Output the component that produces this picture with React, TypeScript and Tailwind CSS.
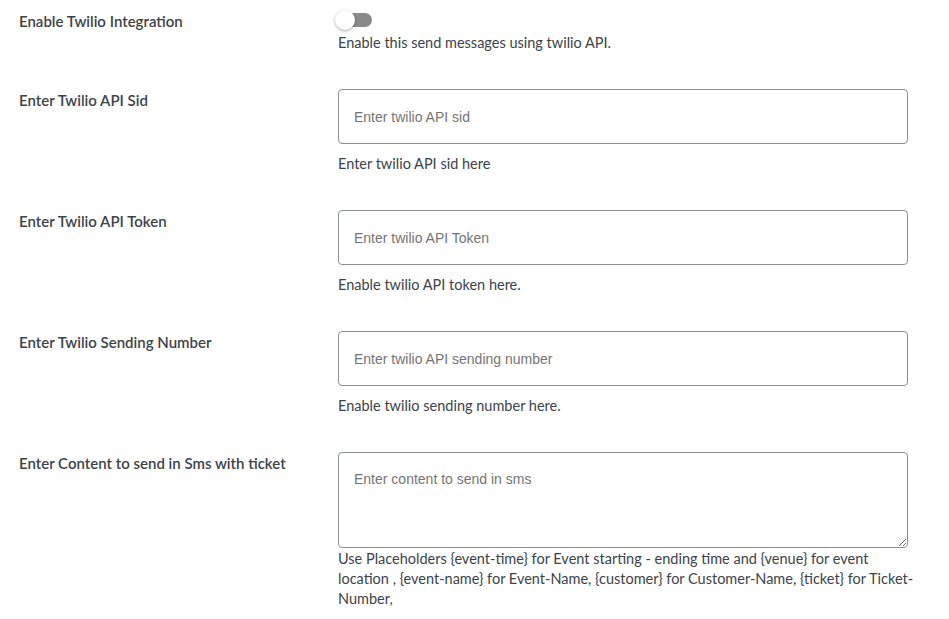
import React from "react";

const font = { fontFamily: "Lato, 'Noto Sans', sans-serif" };

function Row({ label, children }: { label: string; children: React.ReactNode }) {
  return (
    <div className="flex">
      <div className="w-[338px] shrink-0 pl-[19px] pt-[1px] text-[15px] leading-[20px] font-semibold text-[#3c434a]">
        {label}
      </div>
      <div className="w-[570px] flex flex-col">{children}</div>
    </div>
  );
}

function Desc({ children, className = "" }: { children: React.ReactNode; className?: string }) {
  return <p className={"text-[14.5px] leading-[20px] text-[#3c434a] " + className}>{children}</p>;
}

function TextInput({ placeholder }: { placeholder: string }) {
  return (
    <input
      type="text"
      placeholder={placeholder}
      className="h-[55px] w-[570px] rounded-[4px] border border-[#8c8f94] bg-white px-[15px] text-[14px] text-[#2c3338] placeholder:text-[#757575] outline-none"
      style={{ fontFamily: "'Liberation Sans', Arial, sans-serif" }}
    />
  );
}

export default function App() {
  return (
    <div className="min-h-[619px] w-[949px] bg-white pt-[10px]" style={font}>
      <div className="flex flex-col gap-[36px]">
        <Row label="Enable Twilio Integration">
          <div className="relative h-[22px] w-[40px] -mt-[4px] ml-[-4px]">
            <div className="absolute left-[4px] top-[7px] h-[14px] w-[34px] rounded-full bg-[#8a8a8a]" />
            <div className="absolute left-[1px] top-[4px] h-[20px] w-[20px] rounded-full bg-white shadow-[0_1px_3px_rgba(0,0,0,0.35)]" />
          </div>
          <Desc className="mt-[5px]">Enable this send messages using twilio API.</Desc>
        </Row>
        <Row label="Enter Twilio API Sid">
          <TextInput placeholder="Enter twilio API sid" />
          <Desc className="mt-[10px]">Enter twilio API sid here</Desc>
        </Row>
        <Row label="Enter Twilio API Token">
          <TextInput placeholder="Enter twilio API Token" />
          <Desc className="mt-[10px]">Enable twilio API token here.</Desc>
        </Row>
        <Row label="Enter Twilio Sending Number">
          <TextInput placeholder="Enter twilio API sending number" />
          <Desc className="mt-[10px]">Enable twilio sending number here.</Desc>
        </Row>
        <Row label="Enter Content to send in Sms with ticket">
          <textarea
            placeholder="Enter content to send in sms"
            className="block h-[96px] w-[570px] rounded-[4px] border border-[#8c8f94] bg-white px-[15px] py-[16px] text-[14px] leading-[20px] text-[#2c3338] placeholder:text-[#757575] outline-none"
            style={{ fontFamily: "'Liberation Sans', Arial, sans-serif" }}
          />
          <Desc className="mt-[1px] w-[580px] leading-[20.5px]">
            Use Placeholders {"{event-time}"} for Event starting - ending time and {"{venue}"} for event location , {"{event-name}"} for Event-Name, {"{customer}"} for Customer-Name, {"{ticket}"} for Ticket-Number,
          </Desc>
        </Row>
      </div>
    </div>
  );
}
